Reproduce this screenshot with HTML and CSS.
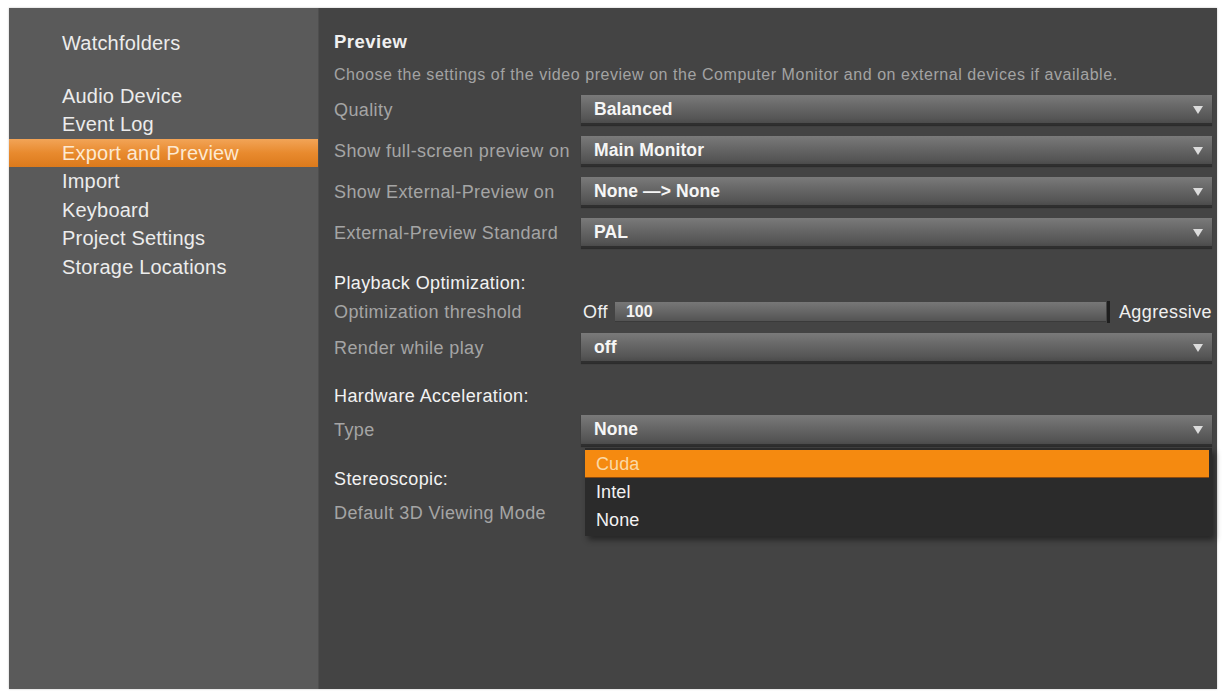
FILE: index.html
```html
<!DOCTYPE html>
<html lang="en">
<head>
<meta charset="utf-8">
<title>Export and Preview</title>
<link rel="stylesheet" href="styles.css">
</head>
<body>
<div class="window">
  <nav class="sidebar">
    <div class="nav-item nav-first">Watchfolders</div>
    <div class="nav-group">
      <div class="nav-item">Audio Device</div>
      <div class="nav-item">Event Log</div>
      <div class="nav-item nav-active">Export and Preview</div>
      <div class="nav-item">Import</div>
      <div class="nav-item">Keyboard</div>
      <div class="nav-item">Project Settings</div>
      <div class="nav-item">Storage Locations</div>
    </div>
  </nav>
  <main class="main">
    <h1 class="title">Preview</h1>
    <p class="desc">Choose the settings of the video preview on the Computer Monitor and on external devices if available.</p>

    <div class="rows">
      <div class="row">
        <span class="label">Quality</span>
        <div class="select"><span>Balanced</span><i class="arrow"></i></div>
      </div>
      <div class="row">
        <span class="label">Show full-screen preview on</span>
        <div class="select"><span>Main Monitor</span><i class="arrow"></i></div>
      </div>
      <div class="row">
        <span class="label">Show External-Preview on</span>
        <div class="select"><span>None —&gt; None</span><i class="arrow"></i></div>
      </div>
      <div class="row">
        <span class="label">External-Preview Standard</span>
        <div class="select"><span>PAL</span><i class="arrow"></i></div>
      </div>
    </div>

    <h2 class="heading h-playback">Playback Optimization:</h2>
    <div class="row row-slider">
      <span class="label">Optimization threshold</span>
      <div class="slider-wrap">
        <span class="slider-end">Off</span>
        <div class="slider"><span>100</span></div>
        <i class="slider-mark"></i>
        <span class="slider-end slider-right">Aggressive</span>
      </div>
    </div>
    <div class="row row-render">
      <span class="label">Render while play</span>
      <div class="select"><span>off</span><i class="arrow"></i></div>
    </div>

    <h2 class="heading h-hw">Hardware Acceleration:</h2>
    <div class="row row-type">
      <span class="label">Type</span>
      <div class="select select-open">
        <span>None</span><i class="arrow"></i>
        <ul class="menu">
          <li class="menu-item menu-active">Cuda</li>
          <li class="menu-item">Intel</li>
          <li class="menu-item">None</li>
        </ul>
      </div>
    </div>

    <h2 class="heading h-stereo">Stereoscopic:</h2>
    <div class="row row-3d">
      <span class="label">Default 3D Viewing Mode</span>
    </div>
  </main>
</div>
</body>
</html>
```

FILE: styles.css
```css
* { box-sizing: border-box; }

html, body {
  margin: 0;
  padding: 0;
  background: #ffffff;
}

body {
  font-family: "Liberation Sans", Arial, sans-serif;
  padding: 8px 9px 6px 9px;
}

.window {
  display: flex;
  height: 681px;
  box-shadow: 0 0 2px rgba(0,0,0,0.25);
}

/* Sidebar */
.sidebar {
  width: 309px;
  background: #5a5a5a;
  padding-top: 21px;
}

.nav-item {
  height: 28.5px;
  line-height: 28.5px;
  padding-left: 53px;
  font-size: 20px;
  color: #ececec;
  letter-spacing: 0.2px;
  white-space: nowrap;
}

.nav-group {
  margin-top: 24px;
}

.nav-active {
  background: linear-gradient(#f2a457 0%, #e88a2e 50%, #dc7a1c 100%);
  color: #fde9d2;
}

/* Main */
.main {
  flex: 1;
  background: #444444;
  padding: 22px 5px 0 15px;
  border-left: 1px solid #4e4e4e;
}

.title {
  margin: 0;
  font-size: 18.5px;
  font-weight: bold;
  line-height: 24px;
  color: #f0f0f0;
  letter-spacing: 0.5px;
}

.desc {
  margin: 11px 0 0 0;
  font-size: 16px;
  line-height: 20px;
  color: #a3a3a3;
  white-space: nowrap;
  letter-spacing: 0.55px;
}

.rows {
  margin-top: 10px;
  display: flex;
  flex-direction: column;
  gap: 11px;
}

.row {
  display: grid;
  grid-template-columns: 247px 1fr;
  align-items: center;
  height: 30px;
}

.label {
  font-size: 18px;
  color: #a5a5a5;
  white-space: nowrap;
  letter-spacing: 0.4px;
}

.select {
  position: relative;
  height: 30px;
  display: flex;
  align-items: center;
  padding-left: 13px;
  background: linear-gradient(#7a7a7a 0%, #686868 40%, #555555 85%, #4b4b4b 100%);
  border-bottom: 2px solid #2f2f2f;
  box-shadow: 0 1px 1px rgba(0,0,0,0.35);
  color: #f6f6f6;
  font-size: 17.5px;
  font-weight: bold;
  letter-spacing: 0.1px;
}

.arrow {
  position: absolute;
  right: 9px;
  top: 11px;
  width: 0;
  height: 0;
  border-left: 5px solid transparent;
  border-right: 5px solid transparent;
  border-top: 8px solid #dcdcdc;
}

.heading {
  margin: 0;
  font-size: 18px;
  font-weight: normal;
  line-height: 24px;
  color: #f2f2f2;
  letter-spacing: 0.4px;
}

.h-playback { margin-top: 23px; }
.h-hw { margin-top: 21px; }
.h-stereo { margin-top: 21px; }

.row-slider {
  margin-top: 5px;
  height: 24px;
}

.slider-wrap {
  display: flex;
  align-items: center;
  height: 24px;
  margin-left: 2px;
}

.slider-end {
  font-size: 18px;
  color: #f0f0f0;
  letter-spacing: 0.4px;
}

.slider {
  flex: 1;
  height: 20px;
  margin-left: 7px;
  display: flex;
  align-items: center;
  padding-left: 11px;
  background: linear-gradient(#777777 0%, #666666 50%, #535353 100%);
  border-bottom: 1px solid #3a3a3a;
  color: #f4f4f4;
  font-size: 16px;
  font-weight: bold;
}

.slider-mark {
  width: 3px;
  height: 22px;
  margin-left: 1px;
  background: #1e1e1e;
}

.slider-right {
  margin-left: 9px;
}

.row-render {
  margin-top: 9px;
}

.row-type {
  margin-top: 7px;
  height: 31px;
}

.row-type .select {
  height: 31px;
}

.menu {
  position: absolute;
  left: 4px;
  right: 0;
  top: 33px;
  margin: 0;
  padding: 2px 3px 2px 0;
  list-style: none;
  background: #2b2b2b;
  box-shadow: 3px 4px 6px rgba(0,0,0,0.45);
  z-index: 5;
}

.menu-item {
  height: 28px;
  line-height: 28px;
  padding-left: 11px;
  font-size: 18px;
  font-weight: normal;
  color: #f2f2f2;
  letter-spacing: 0.1px;
}

.menu-active {
  background: #f58a10;
  color: #fbd9a6;
  border-bottom: 1px solid #8a4a10;
}

.row-3d {
  margin-top: 10px;
  height: 24px;
}
```
